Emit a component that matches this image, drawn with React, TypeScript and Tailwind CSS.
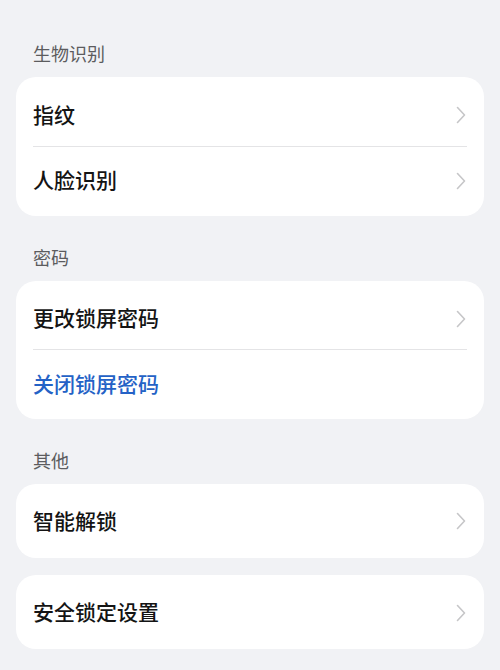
import React from 'react';

const font = { fontFamily: '"Noto Sans", "Noto Sans CJK SC", sans-serif' };

function Chevron() {
  return (
    <svg width="10" height="18" viewBox="0 0 10 18" fill="none" className="shrink-0">
      <path d="M1.5 1.5 L8.5 9 L1.5 16.5" stroke="#c6c6c8" strokeWidth="1.6" strokeLinecap="round" strokeLinejoin="round" />
    </svg>
  );
}

function Row({ label, blue, chevron = true, h, divider }: { label: string; blue?: boolean; chevron?: boolean; h: string; divider?: boolean }) {
  return (
    <div className={`${h} flex items-center pl-[17px] pr-[18px] relative`}>
      <span className={`flex-1 text-[21px] font-medium leading-none ${blue ? 'text-[#2462c6]' : 'text-[#141414]'}`}>{label}</span>
      {chevron && <Chevron />}
      {divider && <div className="absolute left-[17px] right-[17px] bottom-0 h-px bg-[#e4e4e6]" />}
    </div>
  );
}

function Title({ text, top }: { text: string; top: string }) {
  return (
    <div className={`${top} mb-[11px] h-[24px] pl-[33px] flex items-center text-[18px] text-[#5c5c5e]`}>{text}</div>
  );
}

export default function App() {
  return (
    <div className="w-[500px] h-[670px] bg-[#f1f2f5] overflow-hidden" style={font}>
      <Title text="生物识别" top="pt-[42px] h-[66px]" />
      <div className="mx-[16px] bg-white rounded-[20px] overflow-hidden">
        <Row label="指纹" h="h-[70px] pt-[6px]" divider />
        <Row label="人脸识别" h="h-[69px] pb-[2px]" />
      </div>
      <Title text="密码" top="mt-[30px]" />
      <div className="mx-[16px] bg-white rounded-[20px] overflow-hidden">
        <Row label="更改锁屏密码" h="h-[69px] pt-[6px]" divider />
        <Row label="关闭锁屏密码" blue chevron={false} h="h-[69px]" />
      </div>
      <Title text="其他" top="mt-[30px]" />
      <div className="mx-[16px] bg-white rounded-[20px] overflow-hidden">
        <Row label="智能解锁" h="h-[74px]" />
      </div>
      <div className="mx-[16px] mt-[17px] bg-white rounded-[20px] overflow-hidden">
        <Row label="安全锁定设置" h="h-[74px] pt-[1px]" />
      </div>
    </div>
  );
}
